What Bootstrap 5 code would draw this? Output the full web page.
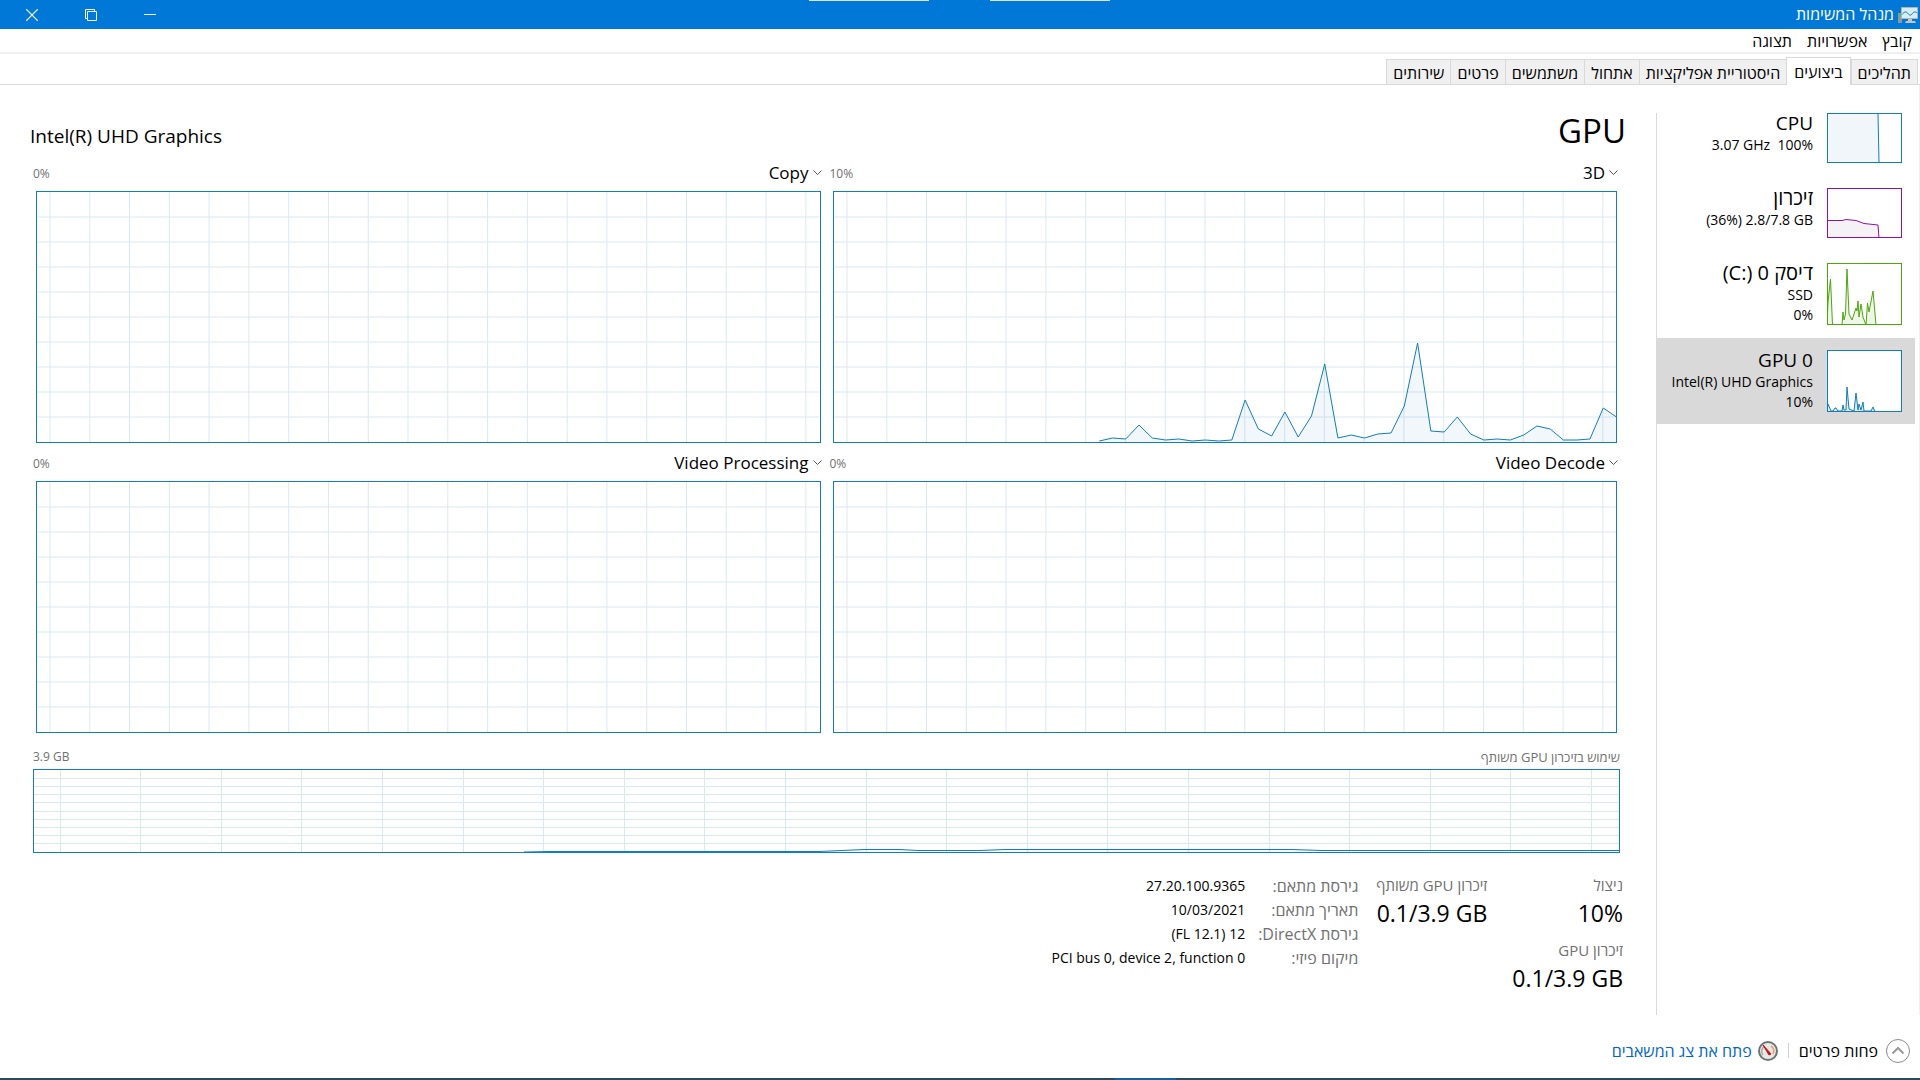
<!DOCTYPE html>
<html lang="he" dir="rtl">
<head>
<meta charset="utf-8">
<meta name="viewport" content="width=device-width, initial-scale=1">
<title>מנהל המשימות</title>
<link href="https://cdn.jsdelivr.net/npm/bootstrap@5.3.0/dist/css/bootstrap.min.css" rel="stylesheet">
<style>
body{font-family:"Open Sans","Noto Sans",sans-serif;font-size:16px;line-height:20px;color:#000;background:#fff}
button{font:inherit;color:inherit;background:none;border:0;padding:0}
.title-bar{height:29px;background:#0078d7;color:#fff;padding-left:2px;padding-right:2px}
.title-name{line-height:29px}
.win-btn{width:59px;height:29px;display:flex;align-items:center;justify-content:center}
.peek{position:absolute;top:0;left:809px;width:301px;height:1px;border-left:120px solid #e1e1e1;border-right:120px solid #e1e1e1}
.menu-strip{height:25px;padding-right:8px;gap:15px;border-bottom:2px solid #f0f0f0}
.tab-strip{height:31px;padding-right:2px;border-bottom:1px solid #d9d9d9}
.tab-strip .nav-link{height:25px;border:1px solid #d9d9d9;border-right:0;border-bottom:0;border-radius:0;background:#f0f0f0;color:#000;padding:0 6px;line-height:26px;margin:0}
.tab-strip .nav-item:first-child .nav-link{border-right:1px solid #d9d9d9}
.tab-strip .nav-link.active{height:28px;background:#fff;border:1px solid #d9d9d9;border-bottom:0;padding:0 7px;margin-bottom:-1px}
.content-row{border-right:1px solid #f0f0f0}
.side{width:263px;border-left:1px solid #d9d9d9;margin-top:28px;padding-right:4px}
.side-item{display:flex;width:100%;gap:14px;padding:12px 13px 12px 0;text-align:left;direction:rtl;margin-bottom:1px;font-size:14px}
.side-item:first-child{padding-top:0}
.side-item.picked{background:#d9d9d9}
.side-text{flex:1;display:flex;flex-direction:column;align-items:flex-start;line-height:20px}
.side-name{font-size:19px;line-height:24px;margin-top:-2px}
.side-name.heb{font-size:20px}
.thumb{width:75px;height:50px;flex:none;background:#fff;border:1px solid #117dbb;display:block}
.thumb.tall{height:62px}
.thumb.mem{border-color:#8b12ae}
.thumb.disk{border-color:#4da60c}
svg{display:block}
.plot svg,.thumb svg{width:100%;height:100%}
.side,.main-pane{min-width:0}
.main-pane{padding:20px 36px 0 33px}
.head-row{margin:0 -6px 0 -3px;height:56px}
.head-title{font-size:33px;line-height:52px;margin:0}
.head-name{font-size:19px;line-height:24px;padding-top:19px}
.plots{display:grid;grid-template-columns:1fr 1fr;column-gap:12px;margin:0 3px}
.plot-head{height:38px;padding-top:8px;margin:0 -1px 0 -3px}
.plots .plot-head.top-row{height:30px;padding-top:0}
.plot-pick{font-size:17px;line-height:24px;display:flex;align-items:center;gap:4px}
.dim{color:#707070}
.tiny{font-size:12px;line-height:26px}
.tiny.heb{font-size:13px}
.plot{border:1px solid #117dbb;height:252px}
.plot.slim{height:84px}
.slim-head{height:36px;padding-top:11px}
.stats{margin:21px -3px 0 0}
.stat-big{font-size:23px;line-height:32px}
.stat-block{margin-bottom:10px;line-height:23px;font-size:15px}
.shared-mem{margin-right:25px;margin-left:18px}
.facts{border-collapse:collapse}
.facts th,.facts td{font-weight:400;line-height:24px;padding:0;height:24px}
.facts td{padding-right:13px;text-align:right;font-size:14px}
.foot{height:63px;padding-right:10px;gap:10px}
.foot a{color:#0066cc;text-decoration:none;gap:6px}
.foot-sep{width:1px;height:15px;background:#d0d0d0}
.task-edge{height:2px;background:linear-gradient(90deg,#2b4a5c 0 1115px,#1660a0 1115px 1176px,#2b4a5c 1176px)}
</style>
<script src="https://cdn.jsdelivr.net/npm/bootstrap@5.3.0/dist/js/bootstrap.bundle.min.js"></script>
</head>
<body class="vh-100 d-flex flex-column overflow-hidden">
<header class="title-bar d-flex justify-content-between position-relative">
  <div class="d-flex align-items-center gap-1">
    <svg width="20" height="18" viewBox="0 0 20 18"><path d="M0 7h4v10H0z" fill="#8d9a9d"/><path d="M1 8h2v1.500H1z" fill="#29d63b"/><path d="M3.500 1.500h16v11h-16z" fill="#d5edf6" stroke="#b9b4ab"/><path d="M4 8.500C6 6 8 5 9.500 7s3 3 4.500 1 3-3 5-1" fill="none" stroke="#1675a8"/><path d="M10 13h4v2h3l1 2H7l1-2h2z" fill="#c6c4c0"/></svg>
    <span class="title-name">מנהל המשימות</span>
  </div>
  <div class="d-flex">
    <button class="win-btn" aria-label="מזער"><svg width="12" height="12"><path d="M0 5.500h12" stroke="#fff"/></svg></button>
    <button class="win-btn" aria-label="שחזר"><svg width="12" height="12" fill="none" stroke="#fff"><path d="M2.500 2.500h9v9h-9zM2 9.500H.500v-9h9V2"/></svg></button>
    <button class="win-btn" aria-label="סגור"><svg width="12" height="12"><path d="M0 0L12 12M12 0L0 12" stroke="#fff" stroke-width="1.200"/></svg></button>
  </div>
  <div class="peek"></div>
</header>
<nav class="menu-strip d-flex align-items-center"><button>קובץ</button><button>אפשרויות</button><button>תצוגה</button></nav>
<ul class="nav tab-strip flex-nowrap align-items-end">
  <li class="nav-item"><button class="nav-link">תהליכים</button></li>
  <li class="nav-item"><button class="nav-link active">ביצועים</button></li>
  <li class="nav-item"><button class="nav-link">היסטוריית אפליקציות</button></li>
  <li class="nav-item"><button class="nav-link">אתחול</button></li>
  <li class="nav-item"><button class="nav-link">משתמשים</button></li>
  <li class="nav-item"><button class="nav-link">פרטים</button></li>
  <li class="nav-item"><button class="nav-link">שירותים</button></li>
</ul>
<div class="content-row d-flex flex-grow-1">
  <aside class="side flex-shrink-0">
    <button class="side-item"><span class="thumb"><svg viewBox="0 0 73 48" preserveAspectRatio="none"><path d="M0 0H50L51 48H0z" fill="#f1f6fa"/><path d="M50 0L51 48" stroke="#117dbb"/></svg></span><span class="side-text"><span class="side-name">CPU</span><span dir="ltr">3.07 GHz&nbsp; 100%</span></span></button>
    <button class="side-item"><span class="thumb mem"><svg viewBox="0 0 73 48" preserveAspectRatio="none"><path d="M-1 31.500H14L18 30.500L28 31.500L36 34.500L50 36L51 49H-1z" fill="#f4f2f4" stroke="#8b12ae"/></svg></span><span class="side-text"><span class="side-name heb">זיכרון</span><span dir="ltr">(36%) 2.8/7.8 GB</span></span></button>
    <button class="side-item"><span class="thumb disk tall"><svg viewBox="0 0 73 60" preserveAspectRatio="none"><path d="M-1 61L0 38L2.500 15L4.500 61H14L15 48L16 56L17.500 50L19 5L21 50L24 56L28 44L29 47L30 37L31 53L33 40L35 53L38 61L39.500 39L41 48L45 27L48 61z" fill="#edf6e7" stroke="#4da60c"/></svg></span><span class="side-text"><span class="side-name heb">דיסק 0 <bdi dir="ltr">(C:)</bdi></span><span>SSD</span><span dir="ltr">0%</span></span></button>
    <button class="side-item picked"><span class="thumb tall"><svg viewBox="0 0 73 60" preserveAspectRatio="none"><path d="M-1 61L0 53L3 60H5L7 57H8L10 60H14L15 54L16 59H18L19 36L21 58L26 60L28 42L30 59L31 53L33 59L35 51L36 60H43L45 56L47 61z" fill="#e3eef6" stroke="#117dbb"/></svg></span><span class="side-text"><span class="side-name" dir="ltr">GPU 0</span><span dir="ltr">Intel(R) UHD Graphics</span><span dir="ltr">10%</span></span></button>
  </aside>
  <main class="main-pane flex-grow-1">
    <div class="head-row d-flex justify-content-between">
      <h1 class="head-title fw-normal">GPU</h1><div class="head-name" dir="ltr">Intel(R) UHD Graphics</div>
    </div>
    <section class="plots">
      <div><div class="plot-head top-row d-flex justify-content-between align-items-start"><button class="plot-pick" dir="ltr">3D <svg width="9" height="6"><path d="M.500.500l4 4 4-4" fill="none" stroke="#555"/></svg></button><span class="tiny dim" dir="ltr">10%</span></div><div class="plot" data-load="1,4,3,17,4,2,3,1,2,1,2,42,13,6,30,5,26,78,4,7,4,8,9,36,99,11,10,25,8,2,3,2,7,16,13,2,2,3,34,25"></div></div>
      <div><div class="plot-head top-row d-flex justify-content-between align-items-start"><button class="plot-pick" dir="ltr">Copy <svg width="9" height="6"><path d="M.500.500l4 4 4-4" fill="none" stroke="#555"/></svg></button><span class="tiny dim" dir="ltr">0%</span></div><div class="plot"></div></div>
      <div><div class="plot-head d-flex justify-content-between align-items-start"><button class="plot-pick" dir="ltr">Video Decode <svg width="9" height="6"><path d="M.500.500l4 4 4-4" fill="none" stroke="#555"/></svg></button><span class="tiny dim" dir="ltr">0%</span></div><div class="plot"></div></div>
      <div><div class="plot-head d-flex justify-content-between align-items-start"><button class="plot-pick" dir="ltr">Video Processing <svg width="9" height="6"><path d="M.500.500l4 4 4-4" fill="none" stroke="#555"/></svg></button><span class="tiny dim" dir="ltr">0%</span></div><div class="plot"></div></div>
    </section>
    <div class="slim-head d-flex justify-content-between"><span class="tiny heb dim">שימוש בזיכרון GPU משותף</span><span class="tiny dim" dir="ltr">3.9 GB</span></div>
    <div class="plot slim"></div>
    <section class="stats d-flex">
      <div>
        <div class="stat-block"><div class="dim">ניצול</div><div class="stat-big"><bdi dir="ltr">10%</bdi></div></div>
        <div class="stat-block"><div class="dim">זיכרון GPU</div><div class="stat-big"><bdi dir="ltr">0.1/3.9 GB</bdi></div></div>
      </div>
      <div class="shared-mem">
        <div class="stat-block"><div class="dim">זיכרון GPU משותף</div><div class="stat-big"><bdi dir="ltr">0.1/3.9 GB</bdi></div></div>
      </div>
      <table class="facts align-self-start">
        <tr><th class="dim" scope="row">גירסת מתאם:</th><td><bdi dir="ltr">27.20.100.9365</bdi></td></tr>
        <tr><th class="dim" scope="row">תאריך מתאם:</th><td><bdi dir="ltr">10/03/2021</bdi></td></tr>
        <tr><th class="dim" scope="row">גירסת DirectX:</th><td><bdi dir="ltr">(FL 12.1) 12</bdi></td></tr>
        <tr><th class="dim" scope="row">מיקום פיזי:</th><td><bdi dir="ltr">PCI bus 0, device 2, function 0</bdi></td></tr>
      </table>
    </section>
  </main>
</div>
<footer class="foot d-flex align-items-center pt-2">
  <button class="d-flex align-items-center gap-2"><svg width="24" height="24" fill="none"><circle cx="12" cy="12" r="11.500" stroke="#8a8a8a"/><path d="M6.500 14.500L12 9l5.500 5.500" stroke="#9a9a9a" stroke-width="2"/></svg>פחות פרטים</button>
  <span class="foot-sep"></span>
  <a href="#" class="d-flex align-items-center"><svg width="20" height="20"><circle cx="10" cy="10" r="9" fill="#e9e9e4" stroke="#6d7476" stroke-width="2"/><path d="M5 14a6 6 0 0 1 2-9" fill="none" stroke="#aaa" stroke-width="1.500"/><path d="M13 5a6 6 0 0 1 2 8" fill="none" stroke="#e9a066" stroke-width="1.500"/><path d="M5 4l8 9-2 1z" fill="#c8101c" stroke="#c8101c"/></svg>פתח את צג המשאבים</a>
</footer>
<div class="task-edge"></div>
<script>
// Builds the grid and the usage curve of one plot.
const stroke = (d, color, crisp) => `<path d="${d}" fill="none" stroke="${color}" vector-effect="non-scaling-stroke"${crisp ? ' shape-rendering="crispEdges"' : ''}/>`;
function build(el, w, h, first, step, line) {
  let grid = '';
  for (let x = first; x < w; x += step) grid += `M${x.toFixed(1)} 0V${h}`;
  for (let i = 1; i < 10; i++) grid += `M0 ${(h * i / 10).toFixed(1)}H${w}`;
  let out = stroke(grid, '#d9e9f3', true);
  if (line.length) {
    const pts = 'M' + line.map(p => p.join(' ')).join('L');
    out += `<path d="${pts}L${w} ${h}L${line[0][0]} ${h}z" fill="#117dbb" fill-opacity=".06"/>` + stroke(pts, '#117dbb', false);
  }
  el.innerHTML = `<svg viewBox="0 0 ${w} ${h}" preserveAspectRatio="none">${out}</svg>`;
}
document.querySelectorAll('.plots .plot').forEach(el => {
  const v = el.dataset.load ? el.dataset.load.split(',').map(Number) : [];
  build(el, 784, 250, 13, 39.86, v.map((n, i) => [((60 - v.length + i) * 784 / 59).toFixed(1), 250 - n]));
});
build(document.querySelector('.plot.slim'), 1585, 82, 26, 80.6,
  [[490,82],[515,81.500],[785,81.500],[830,79.500],[866,79.500],[884,80.500],[946,80.500],[970,79.500],[1258,79.500],[1288,80.500],[1585,80.500]]);
</script>
</body>
</html>
